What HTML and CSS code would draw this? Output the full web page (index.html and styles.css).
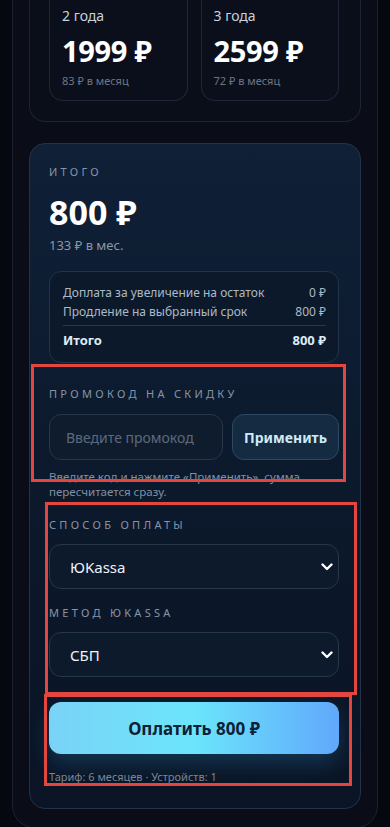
FILE: index.html
```html
<!DOCTYPE html>
<html lang="ru">
<head>
<meta charset="utf-8">
<meta name="viewport" content="width=device-width, initial-scale=1">
<link rel="stylesheet" href="styles.css">
</head>
<body>
<div class="page">
  <div class="panel">
    <section class="plans">
      <div class="plan">
        <div class="plan-term">2 года</div>
        <div class="plan-price">1999 ₽</div>
        <div class="plan-month">83 ₽ в месяц</div>
      </div>
      <div class="plan">
        <div class="plan-term">3 года</div>
        <div class="plan-price">2599 ₽</div>
        <div class="plan-month">72 ₽ в месяц</div>
      </div>
    </section>

    <section class="total-card">
      <div class="label">Итого</div>
      <div class="total-sum">800 ₽</div>
      <div class="total-month">133 ₽ в мес.</div>

      <div class="breakdown">
        <div class="brow"><span>Доплата за увеличение на остаток</span><span>0 ₽</span></div>
        <div class="brow"><span>Продление на выбранный срок</span><span>800 ₽</span></div>
        <div class="brow brow-total"><span>Итого</span><span>800 ₽</span></div>
      </div>

      <div class="promo">
        <div class="label">Промокод на скидку</div>
        <div class="promo-row">
          <input class="promo-input" type="text" placeholder="Введите промокод">
          <button class="promo-btn" type="button">Применить</button>
        </div>
        <p class="hint">Введите код и нажмите «Применить», сумма пересчитается сразу.</p>
      </div>

      <div class="pay">
        <div class="label">Способ оплаты</div>
        <div class="select-wrap">
          <select class="select"><option>ЮKassa</option></select>
          <svg class="chev" width="12" height="8" viewBox="0 0 12 8"><path d="M1.5 1.5 L6 6 L10.5 1.5" fill="none" stroke="#ffffff" stroke-width="2.4" stroke-linecap="round" stroke-linejoin="round"/></svg>
        </div>
        <div class="label label-gap">Метод ЮKassa</div>
        <div class="select-wrap">
          <select class="select"><option>СБП</option></select>
          <svg class="chev" width="12" height="8" viewBox="0 0 12 8"><path d="M1.5 1.5 L6 6 L10.5 1.5" fill="none" stroke="#ffffff" stroke-width="2.4" stroke-linecap="round" stroke-linejoin="round"/></svg>
        </div>
      </div>

      <button class="pay-btn" type="button">Оплатить 800 ₽</button>
      <div class="foot">Тариф: 6 месяцев · Устройств: 1</div>
    </section>
  </div>

  <div class="mark mark-1"></div>
  <div class="mark mark-2"></div>
  <div class="mark mark-3"></div>
</div>
</body>
</html>
```

FILE: styles.css
```css
* { box-sizing: border-box; }

html, body {
  margin: 0;
  padding: 0;
  background: #06080f;
}

body {
  font-family: "Noto Sans", "DejaVu Sans", sans-serif;
  color: #e8eef6;
  height: 827px;
  overflow: hidden;
}

.page {
  position: relative;
  display: flow-root;
  padding: 0 12px;
}

.panel {
  margin-top: -35px;
  background: #0a0d17;
  border: 1px solid #1a2131;
  border-radius: 22px;
  padding: 0 16px 18px;
}

.plans {
  border: 1px solid #1c2536;
  border-top: none;
  border-radius: 0 0 16px 16px;
  background: #0a0e19;
  padding: 0 21px 20px 19px;
  display: grid;
  grid-template-columns: 1fr 1fr;
  gap: 13px;
}

.plan {
  border: 1px solid #202838;
  border-top: none;
  border-radius: 0 0 14px 14px;
  padding: 40px 12px 12px;
  background: #0b0f1b;
}

.plan-term {
  font-size: 14px;
  line-height: 20px;
  color: #c9d1dc;
}

.plan-price {
  margin-top: 8px;
  font-size: 29px;
  line-height: 34px;
  font-weight: 700;
  color: #ffffff;
  letter-spacing: -0.3px;
}

.plan-month {
  margin-top: 6px;
  font-size: 11px;
  line-height: 14px;
  color: #6c7688;
}

.total-card {
  margin-top: 21px;
  border: 1px solid #21324a;
  border-radius: 16px;
  background: linear-gradient(180deg, #0f2037 0%, #0c1a2d 45%, #0a1424 100%);
  padding: 20px 21px 24px 19px;
}

.label {
  font-size: 11px;
  line-height: 16px;
  letter-spacing: 3.3px;
  text-transform: uppercase;
  color: #8794a8;
}

.total-sum {
  margin-top: 12px;
  font-size: 34px;
  line-height: 40px;
  font-weight: 700;
  color: #ffffff;
}

.total-month {
  margin-top: 4px;
  font-size: 13px;
  line-height: 18px;
  color: #8b97a8;
}

.breakdown {
  margin-top: 17px;
  border: 1px solid #22334a;
  border-radius: 12px;
  background: #0b192a;
  padding: 11px 12px 12px 13px;
}

.brow {
  display: flex;
  justify-content: space-between;
  font-size: 12px;
  line-height: 19px;
  color: #aeb9c7;
}

.brow-total {
  margin-top: 4px;
  padding-top: 5px;
  border-top: 1px solid #26384f;
  font-size: 13px;
  font-weight: 700;
  color: #dcebf7;
}

.promo {
  margin-top: 23px;
}

.promo-row {
  margin-top: 12px;
  display: flex;
  gap: 9px;
}

.promo-input {
  flex: 1;
  min-width: 0;
  height: 46px;
  border-radius: 12px;
  border: 1px solid #26364b;
  background: #0f1c2d;
  padding: 0 16px;
  font-family: inherit;
  font-size: 14px;
  color: #e8eef6;
}

.promo-input::placeholder { color: #5c6a7d; }

.promo-btn {
  width: 107px;
  height: 46px;
  border-radius: 12px;
  border: 1px solid #2d4860;
  background: #142b42;
  font-family: inherit;
  font-size: 14px;
  font-weight: 700;
  color: #cfeaf6;
}

.hint {
  margin: 9px 0 0;
  font-size: 11.5px;
  line-height: 15px;
  color: #8290a3;
}

.pay {
  margin-top: 18px;
}

.select-wrap {
  position: relative;
  margin-top: 11px;
}

.label-gap { margin-top: 16px; }

.select {
  display: block;
  width: 100%;
  height: 45px;
  appearance: none;
  -webkit-appearance: none;
  border-radius: 12px;
  border: 1px solid #26364b;
  background: #0d1a2b;
  padding: 0 20px;
  font-family: inherit;
  font-size: 15px;
  color: #eef3f8;
}

.chev {
  position: absolute;
  right: 6px;
  top: 19px;
}

.pay-btn {
  display: block;
  width: 100%;
  margin-top: 25px;
  height: 52px;
  border: none;
  border-radius: 12px;
  background: linear-gradient(90deg, #7ad3f7 0%, #6be5fb 50%, #61a8fb 100%);
  box-shadow: 0 10px 22px rgba(50, 170, 240, 0.22);
  font-family: inherit;
  font-size: 17px;
  font-weight: 700;
  color: #0d2137;
}

.foot {
  margin-top: 16px;
  font-size: 11px;
  line-height: 14px;
  color: #7a8698;
}

.mark {
  position: absolute;
  border: 3px solid #e3463f;
  pointer-events: none;
}

.mark-1 { left: 31px; top: 364px; width: 315px; height: 118px; }
.mark-2 { left: 45px; top: 502px; width: 312px; height: 193px; }
.mark-3 { left: 44px; top: 694px; width: 308px; height: 92px; }
```
